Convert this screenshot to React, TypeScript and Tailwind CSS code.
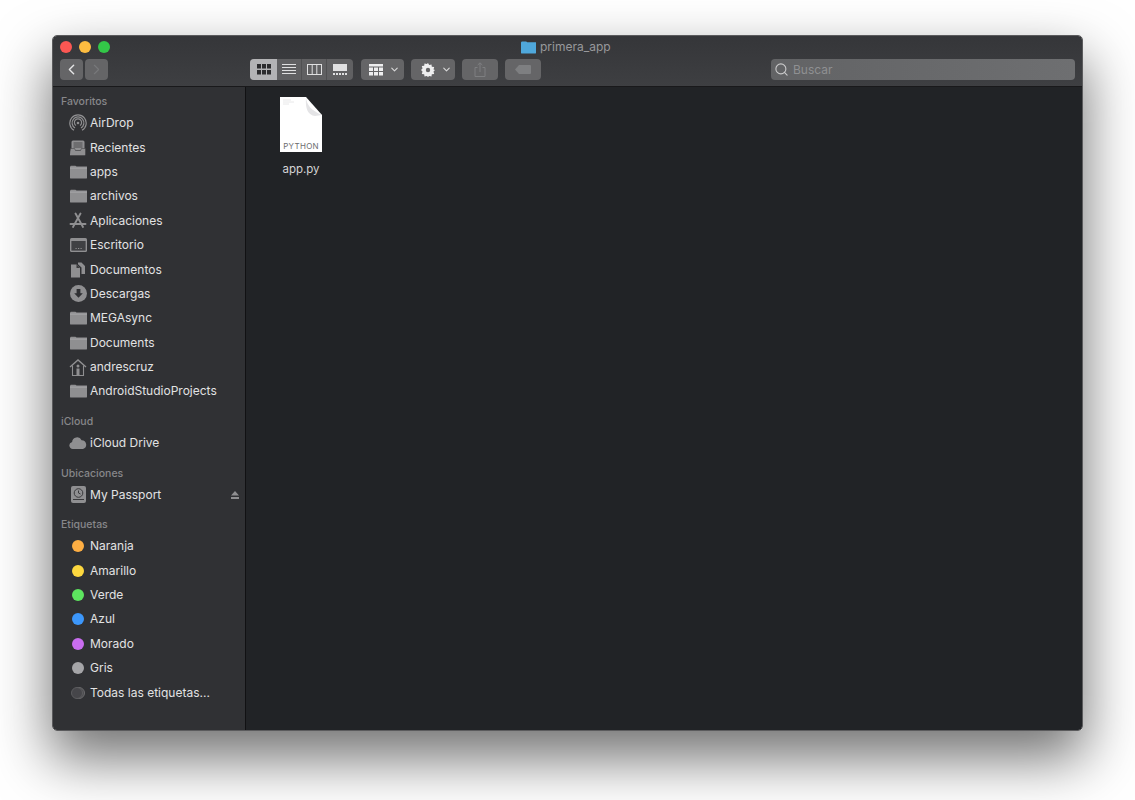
import { ChevronDown, ChevronLeft, ChevronRight, Search } from "lucide-react"
import type { ReactNode } from "react"

const ic = "#8f8f91"

function Folder() {
  return (
    <svg width="17" height="14" viewBox="0 0 18 14">
      <path d="M0 2c0-1 .5-1.6 1.5-1.6h4.2c.8 0 1 .9 1.8.9H18V13a1 1 0 0 1-1 1H1a1 1 0 0 1-1-1z" fill={ic} />
      <rect x="0" y="2.4" width="18" height="1" fill="#a9a9ab" />
    </svg>
  )
}

function AirDrop() {
  return (
    <svg width="18" height="18" viewBox="0 0 18 18" fill="none" stroke={ic} strokeWidth="1.2">
      <path d="M5 16.2a8.2 8.2 0 1 1 8 0" />
      <path d="M6 13.9a5.9 5.9 0 1 1 6 0" />
      <path d="M7 11.5a3.6 3.6 0 1 1 4 0" />
      <circle cx="9" cy="9" r="1.3" fill={ic} stroke="none" />
    </svg>
  )
}

function Recents() {
  return (
    <svg width="16" height="16" viewBox="0 0 16 16">
      <rect x="1.5" y="0.5" width="13" height="10" rx="1.5" fill={ic} />
      <path d="M3.5 3h9M3.5 5h9M3.5 7h9" stroke="#3a3a3c" strokeWidth="0.8" />
      <path d="M0.5 8.5h4l1 2h5l1-2h4v6a1 1 0 0 1-1 1h-14a1 1 0 0 1-1-1z" fill={ic} stroke="#3a3a3c" strokeWidth="0.5" />
    </svg>
  )
}

function Apps() {
  return (
    <svg width="18" height="18" viewBox="0 0 18 18" fill="none" stroke={ic} strokeWidth="1.9" strokeLinecap="round">
      <path d="M6.5 1.5 14 15M11.5 1.5 4 15M1.5 12h15" />
    </svg>
  )
}

function Desktop() {
  return (
    <svg width="17" height="14" viewBox="0 0 17 14">
      <rect x="0" y="0" width="17" height="14" rx="1.5" fill={ic} />
      <rect x="1.4" y="3" width="14.2" height="9.6" fill="#3f4043" />
      <path d="M5.5 10.5h1.2M8 10.5h1.2M10.5 10.5h1.2" stroke={ic} strokeWidth="1.2" />
    </svg>
  )
}

function Docs() {
  return (
    <svg width="16" height="16" viewBox="0 0 16 16">
      <path d="M1 2.5h5.5L10 6v9.5H1z" fill={ic} />
      <path d="M8 .5h3.5L15 4v8h-3.5V5.5L8 2.2z" fill={ic} />
      <path d="M6.5 2.5V6H10" fill="#3a3a3c" />
    </svg>
  )
}

function Download() {
  return (
    <svg width="17" height="17" viewBox="0 0 17 17">
      <circle cx="8.5" cy="8.5" r="8.5" fill={ic} />
      <path d="M6.6 4h3.8v4.2h2.4l-4.3 4.6-4.3-4.6h2.4z" fill="#2f3033" />
    </svg>
  )
}

function Home() {
  return (
    <svg width="18" height="17" viewBox="0 0 18 17" fill="none" stroke={ic} strokeWidth="1.1">
      <path d="M1 8 9 1l8 7" strokeWidth="1.4" />
      <path d="M3.5 6.6v9.9h11V6.6" />
      <circle cx="9" cy="7" r="1.5" fill={ic} stroke="none" />
      <rect x="7.5" y="9.5" width="3" height="7" fill={ic} stroke="none" />
    </svg>
  )
}

function Cloud() {
  return (
    <svg width="18" height="12" viewBox="0 0 18 12">
      <path d="M4 12a3.6 3.6 0 0 1-.9-7.1A5 5 0 0 1 12.6 3.2 4.5 4.5 0 0 1 14 12z" fill={ic} />
    </svg>
  )
}

function Drive() {
  return (
    <svg width="15" height="17" viewBox="0 0 15 17">
      <rect x="0" y="0" width="15" height="17" rx="2" fill={ic} />
      <circle cx="7.5" cy="7" r="4.3" fill="none" stroke="#3a3a3c" strokeWidth="1" />
      <path d="M7.5 4.5V7l2 1M2 13.5h11" stroke="#3a3a3c" strokeWidth="1" fill="none" />
    </svg>
  )
}

function Row({ icon, label, extra }: { icon: ReactNode; label: string; extra?: ReactNode }) {
  return (
    <div className="flex h-[24.4px] items-center pl-[16px] pr-[6px]">
      <span className="flex w-[18px] shrink-0 items-center justify-center">{icon}</span>
      <span className="ml-[3px] flex-1 text-[12px] text-[#e2e2e3]">{label}</span>
      {extra}
    </div>
  )
}

function Heading({ children, first }: { children: string; first?: boolean }) {
  return (
    <div className={`flex h-[18px] items-center pl-[8px] text-[10.5px] font-medium text-[#87878a] ${first ? "" : "mt-[9.2px]"}`}>
      {children}
    </div>
  )
}

function Dot({ color }: { color: string }) {
  return <span className={`h-[12px] w-[12px] rounded-full ${color}`} />
}

const favorites: [ReactNode, string][] = [
  [<AirDrop />, "AirDrop"],
  [<Recents />, "Recientes"],
  [<Folder />, "apps"],
  [<Folder />, "archivos"],
  [<Apps />, "Aplicaciones"],
  [<Desktop />, "Escritorio"],
  [<Docs />, "Documentos"],
  [<Download />, "Descargas"],
  [<Folder />, "MEGAsync"],
  [<Folder />, "Documents"],
  [<Home />, "andrescruz"],
  [<Folder />, "AndroidStudioProjects"],
]

const tags: [string, string][] = [
  ["bg-[#fdae43]", "Naranja"],
  ["bg-[#fdd83f]", "Amarillo"],
  ["bg-[#5de55f]", "Verde"],
  ["bg-[#3c97fb]", "Azul"],
  ["bg-[#c96df0]", "Morado"],
  ["bg-[#a5a5a8]", "Gris"],
]

const btn = "flex h-[21px] items-center justify-center rounded-[4px] bg-[#656567]"

function Toolbar() {
  return (
    <div className="flex h-[51px] flex-col border-b border-[#19191b] bg-gradient-to-b from-[#353639] to-[#3e3f42]">
      <div className="relative flex h-[23px] items-center pb-[2px] pl-[7px]">
        <div className="flex gap-[7px]">
          <span className="h-[12px] w-[12px] rounded-full bg-[#fc5753]" />
          <span className="h-[12px] w-[12px] rounded-full bg-[#fdbc40]" />
          <span className="h-[12px] w-[12px] rounded-full bg-[#33c748]" />
        </div>
        <div className="absolute left-[468px] top-[2px] flex items-center gap-[4px]">
          <svg width="15" height="13" viewBox="0 0 16 13">
            <path d="M0 1.5C0 .6.5 0 1.4 0h4c.8 0 1 .9 1.8.9H16V12a1 1 0 0 1-1 1H1a1 1 0 0 1-1-1z" fill="#4fa8dc" />
          </svg>
          <span className="text-[12px] text-[#98989b]">primera_app</span>
        </div>
      </div>
      <div className="flex h-[21px] items-center pl-[7px]">
        <div className="flex gap-[2px]">
          <div className={`${btn} w-[23px]`}>
            <ChevronLeft size={17} strokeWidth={2} className="text-[#e4e4e5]" />
          </div>
          <div className={`${btn} w-[23px] bg-[#525355]`}>
            <ChevronRight size={17} strokeWidth={1.6} className="text-[#77787a]" />
          </div>
        </div>
        <div className="ml-[142px] flex h-[21px] w-[103px] overflow-hidden rounded-[4px] bg-[#606062]">
          <div className="flex w-[27px] items-center justify-center bg-[#b3b3b5]">
            <svg width="14" height="11" viewBox="0 0 14 11" fill="#2c2c2e">
              <rect x="0" y="0" width="4" height="4.5" />
              <rect x="5" y="0" width="4" height="4.5" />
              <rect x="10" y="0" width="4" height="4.5" />
              <rect x="0" y="6" width="4" height="4.5" />
              <rect x="5" y="6" width="4" height="4.5" />
              <rect x="10" y="6" width="4" height="4.5" />
            </svg>
          </div>
          <div className="flex w-[25px] items-center justify-center border-r border-[#505052]">
            <svg width="14" height="11" viewBox="0 0 14 11" stroke="#e0e0e1" strokeWidth="1">
              <path d="M0 .5h14M0 3.5h14M0 6.5h14M0 9.5h14" />
            </svg>
          </div>
          <div className="flex w-[25px] items-center justify-center border-r border-[#505052]">
            <svg width="15" height="11" viewBox="0 0 15 11" fill="none" stroke="#e0e0e1" strokeWidth="1">
              <rect x="0.5" y="0.5" width="14" height="10" />
              <path d="M5.2 .5v10M9.8 .5v10" />
            </svg>
          </div>
          <div className="flex flex-1 items-center justify-center">
            <svg width="14" height="11" viewBox="0 0 14 11" fill="#e0e0e1">
              <rect x="0" y="0" width="14" height="7" />
              <path d="M0 9h2v2H0zM3 9h2v2H3zM6 9h2v2H6zM9 9h2v2H9zM12 9h2v2h-2z" />
            </svg>
          </div>
        </div>
        <div className={`${btn} ml-[8px] w-[43px] gap-[6px] pl-[3px]`}>
          <svg width="14" height="12" viewBox="0 0 14 12" fill="#eeeeef">
            <rect x="0" y="0" width="14" height="2.5" />
            <path d="M0 3.5h4V7H0zM5 3.5h4V7H5zM10 3.5h4V7h-4zM0 8h4v3.5H0zM5 8h4v3.5H5zM10 8h4v3.5h-4z" />
          </svg>
          <ChevronDown size={11} strokeWidth={2.4} className="text-[#d8d8d9]" />
        </div>
        <div className={`${btn} ml-[7px] w-[44px] gap-[6px] pl-[7px]`}>
          <svg width="14" height="14" viewBox="0 0 14 14">
            <path d="M7 0l1.2 2.1 2.3-.7.3 2.4 2.4.3-.7 2.3L14 7l-1.5 1.6.7 2.3-2.4.3-.3 2.4-2.3-.7L7 14l-1.2-1.1-2.3.7-.3-2.4-2.4-.3.7-2.3L0 7l1.5-1.6-.7-2.3 2.4-.3.3-2.4 2.3.7z" fill="#eeeeef" />
            <circle cx="7" cy="7" r="2.2" fill="#656567" />
          </svg>
          <ChevronDown size={11} strokeWidth={2.4} className="text-[#d8d8d9]" />
        </div>
        <div className={`${btn} ml-[7px] w-[36px] bg-[#525355]`}>
          <svg width="12" height="15" viewBox="0 0 12 15" fill="none" stroke="#7e7f81" strokeWidth="1">
            <path d="M3.5 5.5H1v9h10v-9H8.5M6 10V1M3.7 3 6 .8 8.3 3" />
          </svg>
        </div>
        <div className={`${btn} ml-[7px] w-[36px] bg-[#525355]`}>
          <svg width="16" height="9" viewBox="0 0 16 9">
            <path d="M4 0h11a1 1 0 0 1 1 1v7a1 1 0 0 1-1 1H4L0 4.5z" fill="#7e7f81" />
          </svg>
        </div>
        <div className={`${btn} ml-[230px] w-[304px] justify-start bg-gradient-to-r from-[#626365] to-[#6e6f71] pl-[3px]`}>
          <Search size={15} strokeWidth={1.8} className="text-[#c9c9ca]" />
          <span className="ml-[4px] pt-[1px] text-[12px] text-[#8f9092]">Buscar</span>
        </div>
      </div>
    </div>
  )
}

export default function App() {
  return (
    <div className="h-[800px] w-[1135px] overflow-hidden bg-white pl-[52px] pt-[35px] font-['Inter','Liberation_Sans',sans-serif]">
      <div className="flex h-[696px] w-[1031px] flex-col overflow-hidden rounded-[5px] border border-[#5b5b5d] shadow-[0_26px_55px_2px_rgba(0,0,0,0.55)]">
        <Toolbar />
        <div className="flex min-h-0 flex-1">
          <aside className="w-[193px] shrink-0 border-r border-[#111113] bg-[#303134] pt-[6px]">
            <Heading first>Favoritos</Heading>
            {favorites.map(([icon, label]) => (
              <Row key={label} icon={icon} label={label} />
            ))}
            <Heading>iCloud</Heading>
            <Row icon={<Cloud />} label="iCloud Drive" />
            <Heading>Ubicaciones</Heading>
            <Row
              icon={<Drive />}
              label="My Passport"
              extra={
                <svg width="8" height="8" viewBox="0 0 8 8" fill={ic}>
                  <path d="M4 0l4 4.6H0zM0 6h8v2H0z" />
                </svg>
              }
            />
            <Heading>Etiquetas</Heading>
            {tags.map(([color, label]) => (
              <Row key={label} icon={<Dot color={color} />} label={label} />
            ))}
            <Row
              icon={
                <span className="relative h-[12px] w-[14px]">
                  <span className="absolute left-[2px] top-0 h-[12px] w-[12px] rounded-full border border-[#6b6b6d] bg-[#4a4a4d]" />
                  <span className="absolute left-0 top-0 h-[12px] w-[12px] rounded-full border border-[#5c5c5f] bg-[#46464a]" />
                </span>
              }
              label="Todas las etiquetas..."
            />
          </aside>
          <main className="flex-1 bg-[#212326] pl-[27px] pt-[10px]">
            <div className="flex w-[56px] flex-col items-center">
              <div className="relative flex h-[55px] w-[42px] flex-col justify-end">
                <svg className="absolute inset-0" width="42" height="55" viewBox="0 0 42 55">
                  <path d="M0 0h26l16 18v37H0z" fill="#ffffff" />
                  <path d="M26 0c1 9 5 13 16 18l-7 1c-7-1-10-7-9-19z" fill="#e4e4e6" />
                  <path d="M3 3h8M3 5h11M3 7h6" stroke="#e8e8e9" strokeWidth="1" />
                </svg>
                <span className="relative text-center text-[8px] leading-[12px] tracking-[0.3px] text-[#6c6c6e]">PYTHON</span>
              </div>
              <span className="mt-[10px] text-[11.5px] leading-[14px] text-[#d4d4d5]">app.py</span>
            </div>
          </main>
        </div>
      </div>
    </div>
  )
}
